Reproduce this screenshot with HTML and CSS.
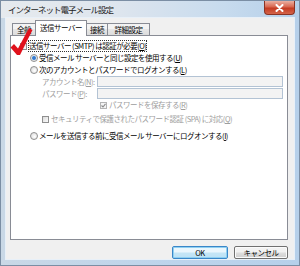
FILE: index.html
```html
<!DOCTYPE html>
<html lang="ja">
<head>
  <meta charset="UTF-8" />
  <title>インターネット電子メール設定</title>
  <link rel="stylesheet" href="styles.css">
</head>
<body>

<div class="window">
  <div class="titlebar">
    <span class="title">インターネット電子メール設定</span>
    <span class="close">
      <svg width="9" height="8" viewBox="0 0 9 8"><path d="M1.5 1 L7.5 7 M7.5 1 L1.5 7" stroke="#fff" stroke-width="2" stroke-linecap="round"/></svg>
    </span>
  </div>

  <div class="client">
    <div class="tabs">
      <div class="tab general">全般</div>
      <div class="tab active">送信サーバー</div>
      <div class="tab connect">接続</div>
      <div class="tab advanced">詳細設定</div>
    </div>

    <div class="panel">
      <div class="row level1"><span class="check"></span><span class="focus">送信サーバー (SMTP) は認証が必要(<u>O</u>)</span></div>
      <div class="row level2"><span class="radio on"></span>受信メール サーバーと同じ設定を使用する(<u>U</u>)</div>
      <div class="row level2"><span class="radio"></span>次のアカウントとパスワードでログオンする(<u>L</u>)</div>
      <div class="field"><span class="label">アカウント名(<u>N</u>):</span><span class="input"></span></div>
      <div class="field second"><span class="label">パスワード(<u>P</u>):</span><span class="input"></span></div>
      <div class="row save disabled"><span class="check on"><svg width="5" height="5" viewBox="0 0 5 5"><path d="M0.5 2.5 L2 4 L4.5 0.8" fill="none" stroke="#8a8a8a" stroke-width="1.1"/></svg></span>パスワードを保存する(<u>R</u>)</div>
      <div class="row level3 disabled spa"><span class="check"></span>セキュリティで保護されたパスワード認証 (SPA) に対応(<u>Q</u>)</div>
      <div class="row level2 last"><span class="radio"></span>メールを送信する前に受信メール サーバーにログオンする(<u>I</u>)</div>
    </div>

    <div class="buttons">
      <button class="btn default">OK</button>
      <button class="btn">キャンセル</button>
    </div>
  </div>

  <svg class="tick" width="300" height="266" viewBox="0 0 300 266">
    <path d="M10.5 47.5 L14 44 L18 48.5 L29 28 L32.5 30 L20 55 L17 55 Z" fill="#e0121c"/>
  </svg>
</div>

</body>
</html>
```

FILE: styles.css
```css
body {
  margin: 0;
  font-family: "Noto Sans CJK JP", "Noto Sans", sans-serif;
  font-size: 7.5px;
  letter-spacing: -0.5px;
  color: #000;
}

.window {
  position: relative;
  width: 300px;
  height: 266px;
  box-sizing: border-box;
  display: flex;
  flex-direction: column;
  background: linear-gradient(90deg, #c9d8e6, #bcd4ec 60%, #b6d0ea);
  border: 1px solid #7b8ea4;
}

.titlebar {
  height: 18px;
  display: flex;
  align-items: flex-start;
  background: linear-gradient(90deg, #e6eaee 0%, #dde5ee 40%, #c7dbee 75%, #b5cfe9 100%);
}

.title {
  padding: 3px 0 0 7px;
  font-size: 8.5px;
  line-height: 11px;
  letter-spacing: -1px;
  color: #1c1c1c;
}

.close {
  margin-left: auto;
  margin-right: 4px;
  width: 29px;
  height: 13px;
  border: 1px solid #8a3324;
  border-top: none;
  border-radius: 0 0 4px 4px;
  background: linear-gradient(#eab0a2, #d8664f 45%, #c43b22 55%, #d4644a);
  display: flex;
  align-items: center;
  justify-content: center;
}

.client {
  flex: 1;
  margin: 0 5px 6px;
  padding: 2px 6px 0 4px;
  background: #f0f0f0;
  box-shadow: 0 0 0 1px #e8f0f8;
  display: flex;
  flex-direction: column;
}

.tabs {
  height: 15px;
  display: flex;
  align-items: flex-end;
  padding-left: 2px;
}

.tab {
  box-sizing: border-box;
  height: 12px;
  line-height: 11px;
  text-align: center;
  margin-left: -1px;
  border: 1px solid #898c95;
  border-bottom: none;
  background: linear-gradient(#f3f3f3 50%, #e6e6e6 50%, #dcdcdc);
}

.tab.general {
  width: 24px;
  margin-left: 0;
}

.tab.active {
  position: relative;
  z-index: 1;
  width: 52px;
  height: 16px;
  line-height: 14px;
  margin-bottom: -1px;
  background: #fff;
}

.tab.connect { width: 22px; }
.tab.advanced { width: 43px; }

.panel {
  height: 199px;
  border: 1px solid #898c95;
  background: #fff;
  padding-top: 4px;
}

.row {
  display: flex;
  align-items: center;
  height: 12px;
  line-height: 12px;
  white-space: nowrap;
}

.level1 { margin-left: 9px; }
.level2 { margin-left: 19px; }
.level3 { margin-left: 31px; }
.save { margin-left: 89px; }
.spa { margin-top: 2px; }
.last { margin-top: 5px; }

.disabled { color: #9d9d9d; }

.focus {
  outline: 1px dotted #333;
  outline-offset: 0;
  line-height: 10px;
}

.check {
  width: 5px;
  height: 5px;
  margin-right: 2px;
  border: 1px solid #8f8f8f;
  background: linear-gradient(135deg, #dcdcdc, #fbfbfb);
  display: flex;
  align-items: center;
  justify-content: center;
}

.check.on {
  border-color: #b4b4b4;
  background: #f4f4f4;
}

.radio {
  width: 6px;
  height: 6px;
  margin-right: 1px;
  border: 1px solid #8f8f8f;
  border-radius: 50%;
  background: radial-gradient(circle at 60% 60%, #fff, #d6d6d6);
}

.radio.on {
  background: radial-gradient(circle, #2a6bc4 0, #4b8fdc 1.8px, #e8e8e8 2.3px, #fff 100%);
}

.field {
  display: flex;
  align-items: center;
  height: 11px;
  margin-left: 31px;
  color: #9d9d9d;
}

.field.second {
  margin-top: 1px;
}

.label {
  width: 55px;
  white-space: nowrap;
}

.input {
  width: 184px;
  height: 9px;
  border: 1px solid #b3c3d4;
  background: #f3f3f3;
}

.buttons {
  display: flex;
  justify-content: flex-end;
  gap: 6px;
  margin-top: 6px;
}

.btn {
  height: 13px;
  padding: 0;
  font-family: inherit;
  font-size: 7.5px;
  letter-spacing: -0.5px;
  line-height: 11px;
  color: #000;
  border-radius: 2px;
}

.btn.default {
  width: 56px;
  border: 1px solid #3a86c8;
  background: linear-gradient(#eaf6fd 45%, #c4e5f6 55%, #bde2f6);
  box-shadow: inset 0 0 0 1px #8fd0f2;
}

.btn:not(.default) {
  width: 54px;
  border: 1px solid #707070;
  background: linear-gradient(#f2f2f2 45%, #dddddd 55%, #cfcfcf);
  box-shadow: inset 0 0 0 1px #fbfbfb;
}

.tick {
  position: absolute;
  left: -1px;
  top: -1px;
  pointer-events: none;
}
```
